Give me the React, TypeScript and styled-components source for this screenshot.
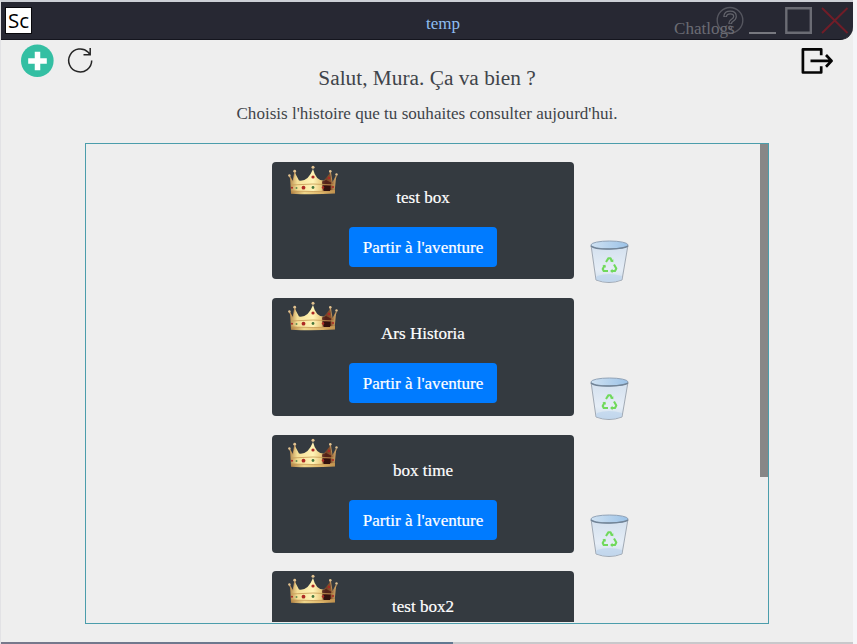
import React from "react";
import styled, { createGlobalStyle } from "styled-components";

const GlobalStyle = createGlobalStyle`
  * { box-sizing: border-box; }
  body { margin: 0; background: #f5f5f8; overflow: hidden; font-family: "Liberation Serif", "Times New Roman", serif; }
`;

const Window = styled.div`
  width: 853px;
  height: 644px;
  display: flex;
  flex-direction: column;
  background: #eeeeee;
  border-top: 2px solid #cdd0d6;
  border-left: 1px solid #e2e2e5;
`;

const TitleBar = styled.header`
  position: relative;
  flex: none;
  height: 38px;
  display: flex;
  justify-content: space-between;
  background: #272833;
  border-bottom: 1px solid #14151e;
  border-bottom-right-radius: 13px;
`;

const Logo = styled.div`
  width: 27px;
  height: 27px;
  margin: 5px 0 0 4px;
  border: 1px solid #08080c;
  background: #fff;
  color: #000;
  font: 20.5px/24px "Open Sans", sans-serif;
  text-align: center;
`;

const WindowTitle = styled.div`
  position: absolute;
  left: 0;
  right: 0;
  top: 12px;
  padding-left: 32px;
  text-align: center;
  font-size: 17.07px;
  line-height: 20px;
  color: #8dbcf0;
`;

const Controls = styled.div`
  position: relative;
  width: 180px;
`;

const ControlIcons = styled.svg`
  display: block;
`;

const Chatlogs = styled.span`
  position: absolute;
  left: 1px;
  top: 17px;
  font-size: 17.07px;
  line-height: 20px;
  color: #6b6c73;
`;

const Toolbar = styled.nav`
  flex: none;
  height: 40px;
  display: flex;
  align-items: flex-start;
  padding: 3px 18px 0 19px;
`;

const ToolButton = styled.button<{ $gap?: string }>`
  width: 35px;
  height: 35px;
  margin: ${(p) => p.$gap ?? "0"};
  padding: 0;
  border: 0;
  background: none;
  svg { display: block; }
`;

const Intro = styled.section`
  flex: none;
  height: 63px;
  margin-top: -14px;
  text-align: center;
  color: #3f444a;
`;

const Greeting = styled.h1`
  margin: 0;
  font-size: 21.33px;
  font-weight: 400;
  line-height: 25px;
`;

const Hint = styled.p`
  margin: 13px 0 0;
  font-size: 17.07px;
  line-height: 20px;
`;

const Panel = styled.main`
  width: 684px;
  height: 481px;
  flex: none;
  margin: 14px 0 0 84px;
  display: flex;
  justify-content: space-between;
  border: 1px solid #4b9dab;
  overflow: hidden;
`;

const StoryList = styled.div`
  height: 478px;
  overflow: hidden;
  display: flex;
  flex-direction: column;
  gap: 18.7px;
  padding: 17.6px 0 0 186px;
`;

const ScrollThumb = styled.div`
  width: 8px;
  height: 333px;
  background: #878787;
`;

const StoryRow = styled.div`
  flex: none;
  display: flex;
  height: 117.9px;
  gap: 16px;
`;

const Card = styled.article`
  position: relative;
  width: 302px;
  display: flex;
  flex-direction: column;
  align-items: center;
  border-radius: 4px;
  padding-top: 26px;
  background: #343a40;
  color: #fff;
  -webkit-text-stroke: 0.2px #fff;
`;

const CrownBadge = styled.svg`
  position: absolute;
  left: 16px;
  top: 3px;
`;

const StoryName = styled.h2`
  margin: 0 0 19px;
  font-size: 17.07px;
  font-weight: 400;
  line-height: 20px;
`;

const StartButton = styled.button`
  width: 148.4px;
  height: 40.3px;
  padding: 1px 0 0;
  border: 0;
  border-radius: 4px;
  background: #007bff;
  color: #fff;
  font: 17.07px/40px "Liberation Serif", serif;
  -webkit-text-stroke: 0.2px #fff;
`;

const DeleteButton = styled.button`
  align-self: flex-end;
  margin-bottom: -5px;
  width: 39px;
  height: 44px;
  padding: 0;
  border: 0;
  background: none;
  svg { display: block; }
`;

const StatusLine = styled.footer`
  flex: none;
  width: 100%;
  height: 2px;
  margin-top: 18px;
  display: flex;
  background: #c8c8cb;
`;

const Progress = styled.div`
  width: 452px;
  background: linear-gradient(90deg, #77788b, #607891);
`;

function Crown() {
  return (
    <CrownBadge width="50" height="31" viewBox="0 0 50 31">
      <defs>
        <linearGradient id="gold" x1="0" y1="0" x2="1" y2="0">
          <stop offset="0" stopColor="#b88d50" />
          <stop offset=".16" stopColor="#f5df96" />
          <stop offset=".5" stopColor="#fff3b5" />
          <stop offset=".68" stopColor="#eacb80" />
          <stop offset=".78" stopColor="#754025" />
          <stop offset=".9" stopColor="#8d5930" />
          <stop offset="1" stopColor="#d6ae6d" />
        </linearGradient>
        <linearGradient id="rim" x2="1">
          <stop stopColor="#b18143" /><stop offset=".3" stopColor="#efd68b" /><stop offset=".65" stopColor="#dfb86d" /><stop offset="1" stopColor="#c0904c" />
        </linearGradient>
      </defs>
      <path d="M1.5 11 5 18M7 7 5 18M48.3 11 45 18M42.3 7 44 18" fill="none" stroke="#b98e59" strokeWidth="1.4" />
      <path d="M2 12 5 17 7 8 11 15.5Q20 17 25 4Q28 16 36 15.5L42 8 44 18 48 12 46.5 28H3Z" fill="url(#gold)" />
      <path d="M34 16.5 38 15 43 17.5V27h-8z" fill="#4a1915" opacity=".8" />
      <path d="M3 25.5Q25 27.5 47 25V28.5Q25 30 3 28.8Z" fill="url(#rim)" />
      <path d="M3.5 20Q25 18 46.5 20M3.5 26Q25 27 47 26" fill="none" stroke="#c79b55" strokeWidth=".8" />
      <path d="M36 21h6v5h-6z" fill="#32110e" />
      <g fill="#e2c391"><circle cx="1.4" cy="10.5" r="1.2" /><circle cx="6.7" cy="6.2" r="1.4" /><circle cx="25" cy="2.2" r="1.5" /><circle cx="42.3" cy="6.2" r="1.3" /><circle cx="48.5" cy="9.5" r="1.2" /></g>
      <g fill="#ad2924"><circle cx="25" cy="12" r="1.6" /><circle cx="15.5" cy="22.7" r="1.9" /><circle cx="4" cy="22.7" r="1" /><circle cx="41" cy="13" r="1.2" /><circle cx="35" cy="22.5" r="1.2" /><circle cx="45" cy="22" r="1" /></g>
      <circle cx="25" cy="22.5" r="1.4" fill="#47763d" /><circle cx="8.5" cy="23" r="1" fill="#638b51" />
    </CrownBadge>
  );
}

function Trash() {
  return (
    <svg width="39" height="44" viewBox="0 0 39 44">
      <defs>
        <linearGradient id="glass" x2="0" y2="1">
          <stop stopColor="#d3e0ee" /><stop offset=".65" stopColor="#e5edf6" /><stop offset="1" stopColor="#cddded" />
        </linearGradient>
        <linearGradient id="opening" x2="1"><stop stopColor="#d0e2f2" /><stop offset="1" stopColor="#9bc2e7" /></linearGradient>
      </defs>
      <path d="M1 5 6 40Q19 45 32 40L38 5Z" fill="url(#glass)" stroke="#98a1ad" strokeWidth=".9" />
      <path d="m6 38 1-2q12-4 25 0l-.5 4q-13 4-25 0Z" fill="#b7d0eb" opacity=".55" />
      <ellipse cx="19.5" cy="5" rx="18.6" ry="4" fill="url(#opening)" stroke="#91a3b7" />
      <path d="M1 6Q5 9.5 20 9T38 6" fill="none" stroke="#718497" strokeWidth="1.6" />
      <g fill="none" stroke="#70d95c" strokeWidth="2.1" strokeLinejoin="round">
        <path d="m16 22 2.5-3.8h2l1.5 3.3" />
        <path d="m24 24.5 2.3 4-1.3 2.5h-3.8" />
        <path d="M18 31h-4.3l-1-2 2-3.8" />
      </g>
      <g fill="#70d95c"><path d="m20.3 21.3 3 1v-3ZM22.5 28.8v4.4l-2.4-2.2ZM12.3 25.8l3-1 .7 3Z" /></g>
    </svg>
  );
}

const stories = ["test box", "Ars Historia", "box time", "test box2"];

export default function App() {
  return (
    <>
      <GlobalStyle />
      <Window>
        <TitleBar>
          <Logo>Sc</Logo>
          <WindowTitle>temp</WindowTitle>
          <Controls>
            <ControlIcons width="180" height="37" viewBox="673 2 180 37" fill="none">
              <circle cx="730" cy="20.3" r="12.8" stroke="#55565f" strokeWidth="1.4" />
              <path d="M725.2 17v-1q.4-3.5 5-3.5 4.8 0 4.8 4 0 2.2-2.8 3.8-2 1.2-2 3.7" stroke="#62636b" strokeWidth="3.8" />
              <path d="M725.2 16.2q.4-3.7 5-3.7 4.8 0 4.8 4 0 2.2-2.8 3.8-2 1.2-2 3" stroke="#272833" strokeWidth="1.4" />
              <circle cx="730.2" cy="27.6" r="1.6" stroke="#62636b" strokeWidth="1.2" />
              <path d="M749 33h27" stroke="#77787f" strokeWidth="2" />
              <path d="M786.3 8.3h24.5v24.5h-24.5z" stroke="#6b6c74" strokeWidth="2.4" />
              <path d="m822 8 25.5 25M847.5 8 822 33" stroke="#711d28" strokeWidth="1.9" />
            </ControlIcons>
            <Chatlogs>Chatlogs</Chatlogs>
          </Controls>
        </TitleBar>
        <Toolbar>
          <ToolButton aria-label="Ajouter">
            <svg width="35" height="35" viewBox="0 0 35 35"><circle cx="17.3" cy="17.7" r="16.3" fill="#34bfa3" /><path d="M17.5 8.7v18.6M8.2 18h18.6" stroke="#fff" strokeWidth="5.5" /></svg>
          </ToolButton>
          <ToolButton aria-label="Actualiser" $gap="0 0 0 10px">
            <svg width="35" height="35" viewBox="65 43 35 35" fill="none" stroke="#252525" strokeWidth="1.5"><path d="M91.7 60.5A11.5 11.5 0 1 1 88.2 52.2L90 54.5M90.2 48v6.8H83.5" /></svg>
          </ToolButton>
          <ToolButton aria-label="Déconnexion" $gap="0 0 0 auto">
            <svg width="35" height="35" viewBox="800.5 42.8 35 35" fill="none" stroke="#050505" strokeWidth="2.7" strokeLinejoin="round"><path d="M821.7 55v-5.9h-18.3v23.2h18.3V66M811 60.7h21M826.5 54.8l5.6 5.9-5.6 5.9" /></svg>
          </ToolButton>
        </Toolbar>
        <Intro>
          <Greeting>Salut, Mura. Ça va bien ?</Greeting>
          <Hint>Choisis l'histoire que tu souhaites consulter aujourd'hui.</Hint>
        </Intro>
        <Panel>
          <StoryList>
            {stories.map((name) => (
              <StoryRow key={name}>
                <Card>
                  <Crown />
                  <StoryName>{name}</StoryName>
                  <StartButton>Partir à l'aventure</StartButton>
                </Card>
                <DeleteButton aria-label="Supprimer"><Trash /></DeleteButton>
              </StoryRow>
            ))}
          </StoryList>
          <ScrollThumb />
        </Panel>
        <StatusLine><Progress /></StatusLine>
      </Window>
    </>
  );
}
